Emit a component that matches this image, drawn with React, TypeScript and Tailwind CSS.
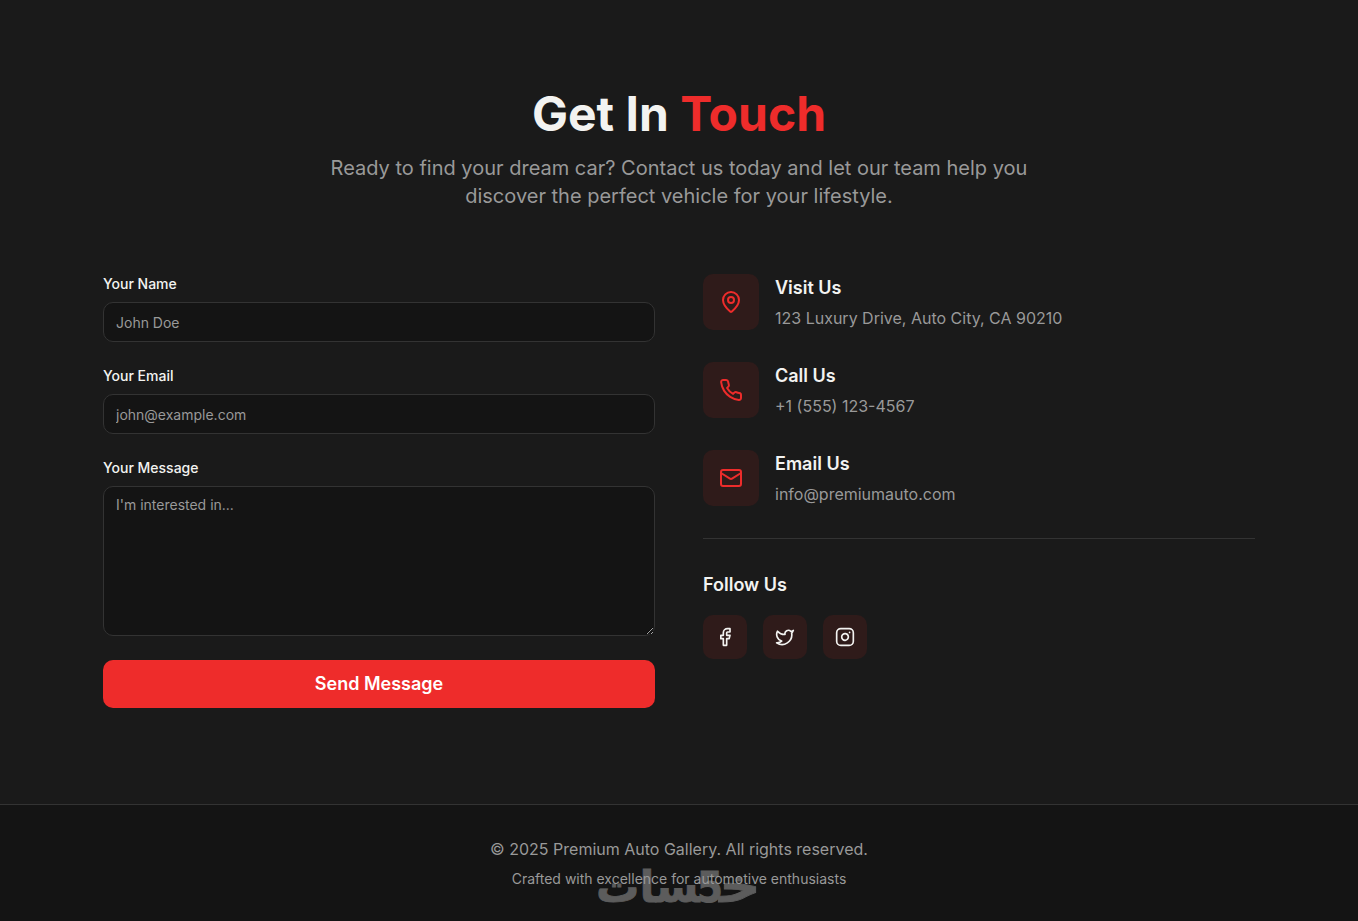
import React from "react";
import { Facebook, Instagram, Twitter, type LucideIcon } from "lucide-react";

interface ContactItemProps {
  icon: React.ReactNode;
  title: string;
  value: string;
}

const contactItems: Array<ContactItemProps> = [
  {
    icon: (
      <>
        <path d="M20 10c0 4.993-5.539 10.193-7.399 11.799a1 1 0 0 1-1.202 0C9.539 20.193 4 14.993 4 10a8 8 0 0 1 16 0" />
        <circle cx="12" cy="10" r="3" />
      </>
    ),
    title: "Visit Us",
    value: "123 Luxury Drive, Auto City, CA 90210",
  },
  {
    icon: (
      <path d="M22 16.92v3a2 2 0 0 1-2.18 2 19.79 19.79 0 0 1-8.63-3.07 19.5 19.5 0 0 1-6-6 19.79 19.79 0 0 1-3.07-8.67A2 2 0 0 1 4.11 2h3a2 2 0 0 1 2 1.72 12.84 12.84 0 0 0 .7 2.81 2 2 0 0 1-.45 2.11L8.09 9.91a16 16 0 0 0 6 6l1.27-1.27a2 2 0 0 1 2.11-.45 12.84 12.84 0 0 0 2.81.7A2 2 0 0 1 22 16.92z" />
    ),
    title: "Call Us",
    value: "+1 (555) 123-4567",
  },
  {
    icon: (
      <>
        <rect width="20" height="16" x="2" y="4" rx="2" />
        <path d="m22 7-8.97 5.7a1.94 1.94 0 0 1-2.06 0L2 7" />
      </>
    ),
    title: "Email Us",
    value: "info@premiumauto.com",
  },
];

const socialLinks: Array<{ icon: LucideIcon; label: string }> = [
  { icon: Facebook, label: "Facebook" },
  { icon: Twitter, label: "Twitter" },
  { icon: Instagram, label: "Instagram" },
];

const ContactItem: React.FC<ContactItemProps> = ({ icon, title, value }) => (
  <div className="flex items-start gap-4">
    <div className="rounded-[10px] bg-[#2f1b1a] p-4">
      <svg
        className="size-6 text-[#ee2c2b]"
        viewBox="0 0 24 24"
        fill="none"
        stroke="currentColor"
        strokeWidth="2"
        strokeLinecap="round"
        strokeLinejoin="round"
      >
        {icon}
      </svg>
    </div>
    <div>
      <h3 className="mb-1 text-lg font-semibold">{title}</h3>
      <p className="text-[#999999]">{value}</p>
    </div>
  </div>
);

const fieldClass =
  "block w-full rounded-[10px] border border-[#333333] bg-[#141414] px-3 py-2 text-sm placeholder:text-[#999999] focus:outline-none focus:border-[#ee2c2b]";

const ContactForm = () => (
  <form className="space-y-6" onSubmit={(e) => e.preventDefault()}>
    <div>
      <label htmlFor="name" className="mb-2 block text-sm font-medium">
        Your Name
      </label>
      <input
        id="name"
        type="text"
        placeholder="John Doe"
        className={`${fieldClass} h-10`}
      />
    </div>
    <div>
      <label htmlFor="email" className="mb-2 block text-sm font-medium">
        Your Email
      </label>
      <input
        id="email"
        type="email"
        placeholder="john@example.com"
        className={`${fieldClass} h-10`}
      />
    </div>
    <div>
      <label htmlFor="message" className="mb-2 block text-sm font-medium">
        Your Message
      </label>
      <textarea
        id="message"
        placeholder="I'm interested in..."
        className={`${fieldClass} min-h-[150px]`}
      />
    </div>
    <button
      type="submit"
      className="h-12 w-full rounded-[10px] bg-[#ee2c2b] text-lg font-semibold text-white hover:bg-[#d92626]"
    >
      Send Message
    </button>
  </form>
);

// Marketplace wordmark, the 5 stands in for the second letter
const Watermark = () => (
  <svg
    className="pointer-events-none absolute top-[58px] left-[597px] h-[48px] w-[166px] fill-[#5c5c5c] stroke-[#5c5c5c] font-['DejaVu_Sans',sans-serif] font-bold"
    viewBox="0 0 166 48"
    textAnchor="middle"
    strokeWidth="0.8"
  >
    <text
      x="143"
      y="38.5"
      textLength="42"
      lengthAdjust="spacingAndGlyphs"
      className="text-[46px]"
    >
      {"\u062e\u200d"}
    </text>
    <text
      x="113"
      y="38.5"
      textLength="26"
      lengthAdjust="spacingAndGlyphs"
      className="text-[43px]"
    >
      5
    </text>
    <text
      x="51"
      y="38.5"
      textLength="104"
      lengthAdjust="spacingAndGlyphs"
      className="text-[44px]"
    >
      {"\u200dسات"}
    </text>
  </svg>
);

export default function App() {
  return (
    <div className="h-[921px] overflow-hidden bg-[#1a1a1a] font-['Inter',sans-serif] text-[#f3f3f1]">
      <section className="pt-[90px] pb-24">
        <div className="mx-auto max-w-6xl">
          <div className="mb-16 text-center">
            <h2 className="mb-4 text-5xl leading-none font-bold">
              Get In <span className="text-[#ee2c2b]">Touch</span>
            </h2>
            <p className="mx-auto max-w-[704px] text-xl leading-7 text-[#999999]">
              Ready to find your dream car? Contact us today and let our team
              help you discover the perfect vehicle for your lifestyle.
            </p>
          </div>

          <div className="grid grid-cols-2 gap-12">
            <ContactForm />

            <div className="space-y-8">
              {contactItems.map((item) => (
                <ContactItem key={item.title} {...item} />
              ))}

              <div className="border-t border-[#333333] pt-8">
                <h3 className="mb-4 text-lg font-semibold">Follow Us</h3>
                <div className="flex gap-4">
                  {socialLinks.map(({ icon: Icon, label }) => (
                    <a
                      key={label}
                      href="#"
                      aria-label={label}
                      className="rounded-[10px] bg-[#2f1b1a] p-3"
                    >
                      <Icon className="size-5" />
                    </a>
                  ))}
                </div>
              </div>
            </div>
          </div>
        </div>
      </section>

      <footer className="relative border-t border-[#333333] bg-[#141414] py-8 text-center text-[#999999]">
        <Watermark />
        <p className="relative">
          © 2025 Premium Auto Gallery. All rights reserved.
        </p>
        <p className="relative mt-2 text-sm">
          Crafted with excellence for automotive enthusiasts
        </p>
      </footer>
    </div>
  );
}
